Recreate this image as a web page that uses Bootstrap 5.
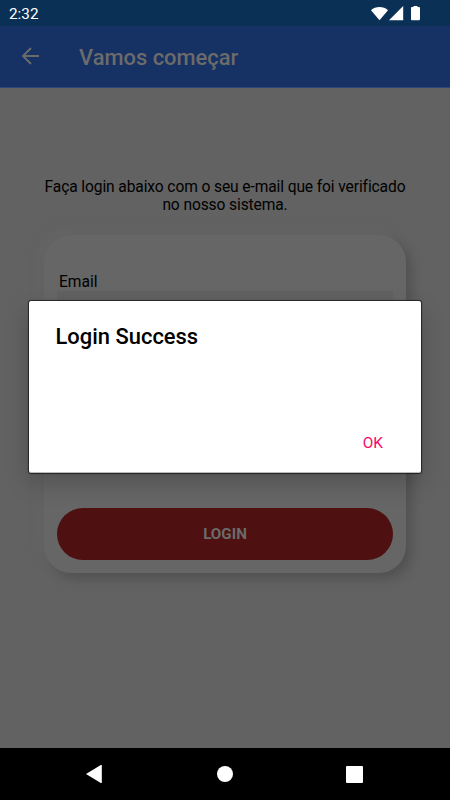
<!DOCTYPE html>
<html lang="pt-BR">
<head>
<meta charset="utf-8">
<meta name="viewport" content="width=device-width, initial-scale=1">
<title>Vamos começar</title>
<link href="https://cdn.jsdelivr.net/npm/bootstrap@5.3.0/dist/css/bootstrap.min.css" rel="stylesheet">
<style>
html, body { height: 100%; }
body { font-family: Roboto, "Liberation Sans", sans-serif; background: #626262; color: #000; overflow: hidden; }
svg { display: block; }
.screen { width: 450px; height: 800px; }
.status-bar { height: 26px; background: #0a3055; font-size: 15.3px; padding: 3px 29px 0 9px; }
.status-icons { margin-bottom: 2px; }
.app-bar { height: 62px; background: #163163; padding-left: 21px; border-bottom: 1px solid #2e4778; color: #6b6b6b; }
.back-arrow { margin-bottom: 1px; }
.app-title { font-size: 21.9px; font-weight: 500; line-height: 26px; margin: 3px 0 0 39px; }
.intro { margin-top: 90px; font-size: 15.6px; line-height: 18px; letter-spacing: -.12px; }
.login-panel { width: 362px; height: 338px; margin-top: 21px; border-radius: 27px; background: #666; padding: 39px 13px 13px;
  box-shadow: 6px 6px 12px rgba(0,0,0,.17), -5px -5px 9px #656565; }
.field-label { font-size: 15.6px; line-height: 17px; padding-left: 2px; }
.field { height: 52px; background: #616161; }
.login-btn, .login-btn:hover { height: 52px; border-radius: 26px; background: #4e1010; color: #6b6b6b; font-size: 15.2px; font-weight: 700; border: 0; }
.dialog-box { left: 29px; top: 301px; width: 392px; height: 172px; background: #fff; border-radius: 2px; padding: 23px 25px 17px 26.5px;
  border-bottom: 1px solid #bbb; box-shadow: 0 0 1px 1px rgba(0,0,0,.6), 0 10px 24px rgba(0,0,0,.2); }
.dialog-title { font-size: 21.9px; font-weight: 500; line-height: 26px; letter-spacing: .02px; }
.ok-btn, .ok-btn:hover { color: #f50a6b; font-size: 15.4px; line-height: 24px; border: 0; padding: 0 13px; }
.nav-keys { height: 52px; background: #000; padding: 0 87px 0 86px; }
</style>
<script src="https://cdn.jsdelivr.net/npm/bootstrap@5.3.0/dist/js/bootstrap.bundle.min.js"></script>
</head>
<body>
<div class="screen d-flex flex-column position-relative overflow-hidden">
  <div class="status-bar d-flex align-items-center justify-content-between text-white">
    <span>2:32</span>
    <svg class="status-icons" width="50" height="16" viewBox="0 0 50 16" fill="#fff"><path d="M0 4.200C4.500-.1 12.500-.1 17 4.200L8.500 14.300Z"/><path d="M18 14.300 32.200 0v14.300Z"/><path d="M42.500 1.100V0h4v1.100h1.500q1 0 1 1v11.200q0 1-1 1h-7q-1 0-1-1V2.100q0-1 1-1Z"/></svg>
  </div>
  <header class="app-bar d-flex align-items-center">
    <svg class="back-arrow" width="19" height="18" viewBox="0 0 19 18" fill="none" stroke="#6b6b6b" stroke-width="1.9"><path d="M18 9H2M10 1 2 9l8 8"/></svg>
    <h1 class="app-title">Vamos começar</h1>
  </header>
  <main class="flex-grow-1 d-flex flex-column align-items-center">
    <p class="intro text-center mb-0">Faça login abaixo com o seu e-mail que foi verificado<br>no nosso sistema.</p>
    <section class="login-panel d-flex flex-column">
      <label class="field-label">Email</label>
      <div class="field"></div>
      <button class="login-btn btn w-100 mt-auto p-0" type="button">LOGIN</button>
    </section>
  </main>
  <footer class="nav-keys d-flex align-items-center justify-content-between">
    <svg width="17" height="18" viewBox="0 0 17 18" fill="#fff"><path d="M0 9 14.800 0h1v18h-1Z"/></svg>
    <svg width="16" height="16" viewBox="0 0 16 16" fill="#fff"><circle cx="8" cy="8" r="8"/></svg>
    <svg width="17" height="17" viewBox="0 0 17 17" fill="#fff"><rect width="17" height="17" rx="1"/></svg>
  </footer>
  <div class="dialog-box position-absolute d-flex flex-column" role="dialog">
    <h2 class="dialog-title mb-0">Login Success</h2>
    <button class="ok-btn btn mt-auto align-self-end" type="button">OK</button>
  </div>
</div>
</body>
</html>
